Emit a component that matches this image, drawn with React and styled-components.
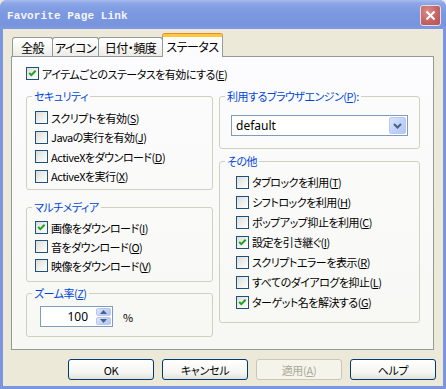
import React from "react";
import styled, { createGlobalStyle } from "styled-components";

const GlobalStyle = createGlobalStyle`
  html, body {
    margin: 0;
    padding: 0;
    background: #ece9d8;
  }
  body {
    font-family: "Noto Sans CJK JP", "Noto Sans", sans-serif;
    font-size: 11px;
    letter-spacing: -0.5px;
    color: #000;
  }
`;

const security = [
  { label: "スクリプトを有効", key: "S" },
  { label: "Javaの実行を有効", key: "J" },
  { label: "ActiveXをダウンロード", key: "D" },
  { label: "ActiveXを実行", key: "X" },
];

const media = [
  { label: "画像をダウンロード", key: "I", checked: true },
  { label: "音をダウンロード", key: "O" },
  { label: "映像をダウンロード", key: "V" },
];

const others = [
  { label: "タブロックを利用", key: "T" },
  { label: "シフトロックを利用", key: "H" },
  { label: "ポップアップ抑止を利用", key: "C" },
  { label: "設定を引き継ぐ", key: "I", checked: true },
  { label: "スクリプトエラーを表示", key: "R" },
  { label: "すべてのダイアログを抑止", key: "L" },
  { label: "ターゲット名を解決する", key: "G", checked: true },
];

const tabs = [
  { label: "全般", w: 41 },
  { label: "アイコン", w: 47 },
  { label: "日付・頻度", w: 65 },
  { label: "ステータス", w: 61, active: true },
];

const Window = styled.div`
  width: 446px;
  height: 389px;
  box-sizing: border-box;
  display: flex;
  flex-direction: column;
  background: #7a96df;
  border-radius: 7px 7px 0 0;
  overflow: hidden;
`;

const TitleBar = styled.div`
  height: 29px;
  flex: none;
  box-sizing: border-box;
  display: flex;
  align-items: center;
  justify-content: space-between;
  padding: 2px 5px 0 7px;
  background: linear-gradient(
    to bottom,
    #a8bdf0 0%,
    #8aa6e6 12%,
    #7c98e0 45%,
    #7894de 85%,
    #7f9ae0 100%
  );
`;

const Title = styled.span`
  font-family: "Liberation Mono", "DejaVu Sans Mono", monospace;
  font-weight: bold;
  font-size: 11px;
  letter-spacing: 0.1px;
  color: #f3f6fd;
`;

const CloseButton = styled.div`
  width: 21px;
  height: 21px;
  box-sizing: border-box;
  border: 1px solid #e9dbe4;
  border-radius: 3px;
  background: radial-gradient(circle at 35% 30%, #dc8c8c 0%, #c46464 55%, #b45252 100%);
  display: flex;
  align-items: center;
  justify-content: center;
`;

const Client = styled.div`
  flex: 1;
  margin: 0 3px 3px;
  background: #ece9d8;
  display: flex;
  flex-direction: column;
`;

const TabStrip = styled.div`
  display: flex;
  align-items: flex-end;
  height: 27px;
  padding-left: 9px;
  position: relative;
  z-index: 1;
`;

const Tab = styled.div`
  width: ${(p) => p.$w}px;
  height: ${(p) => (p.$active ? 23 : 19)}px;
  box-sizing: border-box;
  display: flex;
  align-items: center;
  justify-content: center;
  border: 1px solid #919b9c;
  border-bottom: none;
  border-top: ${(p) => (p.$active ? "3px solid #ffc73c" : "1px solid #919b9c")};
  border-radius: 3px 3px 0 0;
  margin-bottom: ${(p) => (p.$active ? -1 : 0)}px;
  margin-right: ${(p) => (p.$active ? 0 : -1)}px;
  padding-bottom: ${(p) => (p.$active ? 1 : 0)}px;
  background: ${(p) =>
    p.$active
      ? "#fcfcfe"
      : "linear-gradient(to bottom, #ffffff 0%, #f9f9f7 40%, #ecebe6 100%)"};
  box-shadow: ${(p) => (p.$active ? "0 -1px 0 #e68b2c" : "none")};
  font-size: 12px;
  white-space: nowrap;
  font-feature-settings: "palt";
`;

const Panel = styled.div`
  height: 294px;
  box-sizing: border-box;
  margin: 0 9px 0 8px;
  border: 1px solid #919b9c;
  background: linear-gradient(to bottom, #fcfcfe 0%, #f7f7f3 100%);
  padding: 10px 0 0 14px;
  display: flex;
  flex-direction: column;
`;

const MainRow = styled.label`
  display: flex;
  align-items: center;
  height: 13px;
  gap: 3px;
  white-space: nowrap;
  font-feature-settings: "palt";
`;

const Columns = styled.div`
  display: flex;
  gap: 6px;
  margin-top: 9px;
`;

const Column = styled.div`
  width: ${(p) => p.$w}px;
  display: flex;
  flex-direction: column;
`;

const Group = styled.fieldset`
  margin: ${(p) => p.$mt || 0}px 0 0;
  padding: 0;
  height: ${(p) => p.$h}px;
  box-sizing: border-box;
  border: 1px solid #d0d0bf;
  border-radius: 3px;
  min-width: 0;
`;

const Legend = styled.legend`
  margin-left: 5px;
  padding: 0 2px;
  height: 14px;
  line-height: 14px;
  color: #0046d5;
  white-space: nowrap;
  font-feature-settings: "palt";
`;

const GroupBody = styled.div`
  padding-top: ${(p) => p.$pt}px;
  display: flex;
  flex-direction: column;
`;

const Row = styled.label`
  height: ${(p) => p.$h}px;
  display: flex;
  align-items: center;
  gap: 3px;
  padding-left: ${(p) => p.$indent}px;
  white-space: nowrap;
  font-feature-settings: "palt";
`;

const Box = styled.span`
  width: 13px;
  height: 13px;
  flex: none;
  box-sizing: border-box;
  border: 1px solid #1c5180;
  background: linear-gradient(135deg, #dcdcd7 0%, #f2f2ef 60%, #ffffff 100%);
  display: flex;
  align-items: center;
  justify-content: center;
`;

const Select = styled.div`
  width: 177px;
  height: 21px;
  margin-left: 11px;
  box-sizing: border-box;
  border: 1px solid #7f9db9;
  background: #fff;
  display: flex;
  align-items: center;
  justify-content: space-between;
  padding: 1px;
`;

const SelectValue = styled.span`
  padding-left: 3px;
  font-family: "Noto Sans", "Noto Sans CJK JP", sans-serif;
  font-size: 12px;
  letter-spacing: 0;
`;

const BlueButton = styled.span`
  box-sizing: border-box;
  border: 1px solid #b8c9f1;
  border-radius: 2px;
  background: linear-gradient(135deg, #dbe5fd 0%, #c2d3fa 50%, #b3c6f5 100%);
  display: flex;
  align-items: center;
  justify-content: center;
`;

const SelectButton = styled(BlueButton)`
  width: 17px;
  height: 17px;
`;

const ZoomRow = styled.div`
  display: flex;
  align-items: center;
  gap: 10px;
  padding-left: 13px;
`;

const Spin = styled.div`
  width: 73px;
  height: 21px;
  box-sizing: border-box;
  border: 1px solid #7f9db9;
  background: #fff;
  display: flex;
  align-items: center;
  justify-content: flex-end;
  padding: 1px;
`;

const SpinValue = styled.span`
  padding-right: 8px;
  font-family: "Noto Sans", "Noto Sans CJK JP", sans-serif;
  font-size: 12px;
  letter-spacing: 0;
`;

const SpinButtons = styled.div`
  width: 15px;
  height: 17px;
  display: flex;
  flex-direction: column;
  gap: 1px;
`;

const SpinButton = styled(BlueButton)`
  flex: 1;
`;

const Buttons = styled.div`
  display: flex;
  justify-content: flex-end;
  gap: 8px;
  margin-top: 9px;
  padding-right: 7px;
`;

const Button = styled.button`
  width: 86px;
  height: 21px;
  box-sizing: border-box;
  border: 1px solid ${(p) => (p.disabled ? "#c9c7ba" : "#003c74")};
  border-radius: 3px;
  background: ${(p) =>
    p.disabled
      ? "#f5f4ea"
      : "linear-gradient(to bottom, #ffffff 0%, #f4f4f0 70%, #e3e0d6 100%)"};
  color: ${(p) => (p.disabled ? "#aca899" : "#000")};
  font-family: "Noto Sans CJK JP", "Noto Sans", sans-serif;
  font-size: 11px;
  letter-spacing: -0.3px;
  padding: 0;
  font-feature-settings: "palt";
`;

const Mnemonic = ({ k }) => (
  <>
    (<u>{k}</u>)
  </>
);

const CheckBox = ({ checked }) => (
  <Box>
    {checked && (
      <svg width="11" height="11" viewBox="0 0 11 11">
        <polyline
          points="2.2,5 4.3,7.1 8.6,2.8"
          fill="none"
          stroke="#21a121"
          strokeWidth="2"
        />
      </svg>
    )}
  </Box>
);

const CheckRow = ({ item, h, indent }) => (
  <Row $h={h} $indent={indent}>
    <CheckBox checked={item.checked} />
    <span>
      {item.label}
      <Mnemonic k={item.key} />
    </span>
  </Row>
);

const App = () => {
  return (
    <>
      <GlobalStyle />
      <Window>
        <TitleBar>
          <Title>Favorite Page Link</Title>
          <CloseButton>
            <svg width="11" height="11" viewBox="0 0 11 11">
              <path d="M1.5 1.5 L9.5 9.5 M9.5 1.5 L1.5 9.5" stroke="#fff" strokeWidth="2" />
            </svg>
          </CloseButton>
        </TitleBar>

        <Client>
          <TabStrip>
            {tabs.map((t) => (
              <Tab key={t.label} $w={t.w} $active={t.active}>
                {t.label}
              </Tab>
            ))}
          </TabStrip>

          <Panel>
            <MainRow>
              <CheckBox checked />
              <span>
                アイテムごとのステータスを有効にする
                <Mnemonic k="E" />
              </span>
            </MainRow>

            <Columns>
              <Column $w={187}>
                <Group $h={101}>
                  <Legend>セキュリティ</Legend>
                  <GroupBody $pt={5}>
                    {security.map((it) => (
                      <CheckRow key={it.key} item={it} h={19.5} indent={8} />
                    ))}
                  </GroupBody>
                </Group>

                <Group $h={82} $mt={10}>
                  <Legend>マルチメディア</Legend>
                  <GroupBody $pt={4}>
                    {media.map((it) => (
                      <CheckRow key={it.key} item={it} h={19} indent={8} />
                    ))}
                  </GroupBody>
                </Group>

                <Group $h={51} $mt={4}>
                  <Legend>
                    ズーム率
                    <Mnemonic k="Z" />
                  </Legend>
                  <GroupBody $pt={6}>
                    <ZoomRow>
                      <Spin>
                        <SpinValue>100</SpinValue>
                        <SpinButtons>
                          <SpinButton>
                            <svg width="7" height="4" viewBox="0 0 7 4">
                              <path d="M0 4 L3.5 0 L7 4 Z" fill="#4d6185" />
                            </svg>
                          </SpinButton>
                          <SpinButton>
                            <svg width="7" height="4" viewBox="0 0 7 4">
                              <path d="M0 0 L3.5 4 L7 0 Z" fill="#4d6185" />
                            </svg>
                          </SpinButton>
                        </SpinButtons>
                      </Spin>
                      <span>%</span>
                    </ZoomRow>
                  </GroupBody>
                </Group>
              </Column>

              <Column $w={201}>
                <Group $h={60}>
                  <Legend>
                    利用するブラウザエンジン
                    <Mnemonic k="P" />:
                  </Legend>
                  <GroupBody $pt={12}>
                    <Select>
                      <SelectValue>default</SelectValue>
                      <SelectButton>
                        <svg width="9" height="6" viewBox="0 0 9 6">
                          <path
                            d="M1 1 L4.5 4.5 L8 1"
                            fill="none"
                            stroke="#4d6185"
                            strokeWidth="2"
                          />
                        </svg>
                      </SelectButton>
                    </Select>
                  </GroupBody>
                </Group>

                <Group $h={169} $mt={5}>
                  <Legend>その他</Legend>
                  <GroupBody $pt={4}>
                    {others.map((it) => (
                      <CheckRow key={it.label} item={it} h={20} indent={16} />
                    ))}
                  </GroupBody>
                </Group>
              </Column>
            </Columns>
          </Panel>

          <Buttons>
            <Button>OK</Button>
            <Button>キャンセル</Button>
            <Button disabled>
              適用
              <Mnemonic k="A" />
            </Button>
            <Button>ヘルプ</Button>
          </Buttons>
        </Client>
      </Window>
    </>
  );
};

export default App;
